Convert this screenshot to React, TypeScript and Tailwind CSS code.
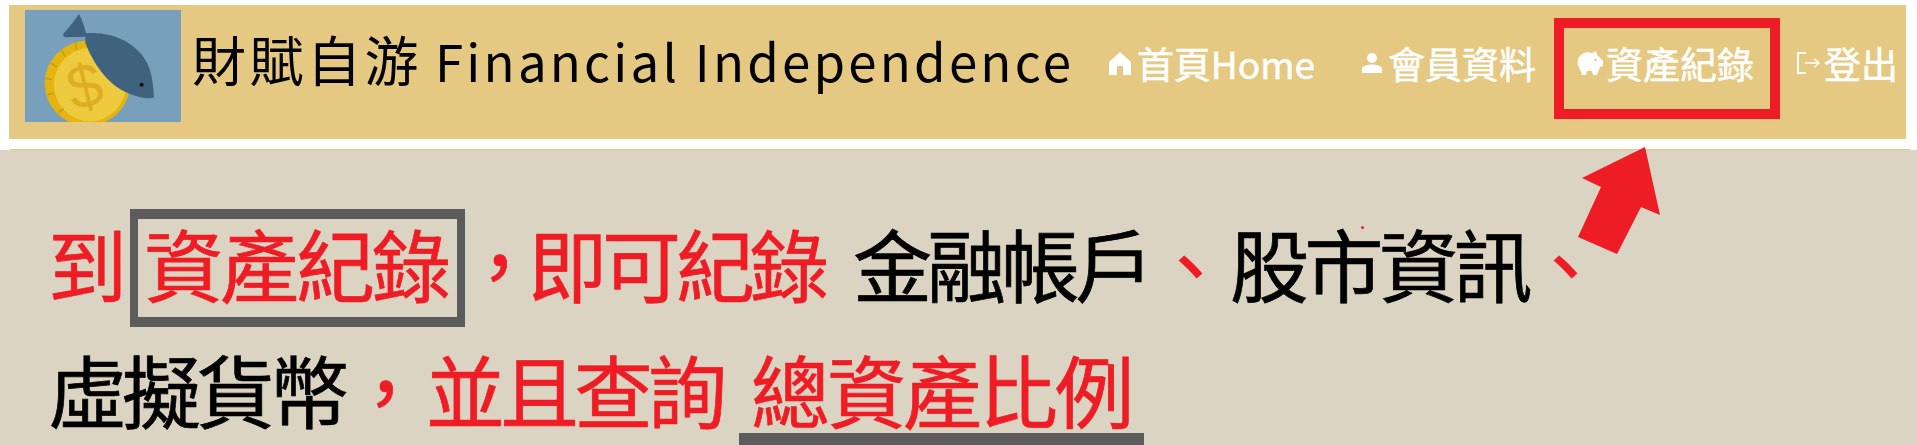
function Logo() {
  return (
    <svg viewBox="45 30 468 336" className="w-[156px] h-[112px] shrink-0 mt-[5px] ml-[16px]">
      <rect x="45" y="30" width="468" height="336" fill="#789FBC" />
      <clipPath id="logo-clip"><rect x="45" y="30" width="468" height="336" /></clipPath>
      <g clipPath="url(#logo-clip)">
        <ellipse cx="232" cy="250" rx="128" ry="128" fill="#E5B50F" />
        <ellipse cx="240" cy="254" rx="108" ry="110" fill="#EECB3E" />
        <g stroke="#B99A1C" strokeWidth="4">
          <path d="M196 128l4 22M155 150l10 20M122 190l18 10M106 236l20 2M112 284l20-4M145 338l16-12" />
        </g>
        <text x="222" y="322" fontSize="185" fontFamily="Liberation Sans" fill="#DDAE22" transform="rotate(-14 222 250)" textAnchor="middle">$</text>
        <path d="M226 100C300 92 380 125 412 190C428 225 430 265 432 292C425 300 380 292 345 275C290 248 250 190 226 128Z" fill="#3F627F" />
        <path d="M207 42C218 60 224 85 232 110L165 112C155 105 160 100 168 92C182 78 195 58 207 42Z" fill="#3F627F" />
        <circle cx="395" cy="254" r="6" fill="#0b0b0b" />
      </g>
    </svg>
  );
}

function HomeIcon() {
  return (
    <svg viewBox="0 0 22 24" className="w-[22px] h-[24px] shrink-0" fill="#fff">
      <path d="M11 1L22 11V24H14V15H8V24H0V11Z" />
    </svg>
  );
}

function PersonIcon() {
  return (
    <svg viewBox="0 0 20 20" className="w-[20px] h-[20px] shrink-0" fill="#fff">
      <circle cx="10" cy="5" r="5" />
      <path d="M0 20V16C0 13 5 11.500 10 11.500S20 13 20 16V20Z" />
    </svg>
  );
}

function PiggyIcon() {
  return (
    <svg viewBox="0 0 26 24" className="w-[26px] h-[24px] shrink-0" fill="#fff">
      <path d="M5 3C8 1 12 1 15 2L19 0C19 2 20 3 21 5C23 6 24 8 24.500 9L26 9V15L23 16L20 24H16L15 20H10L9 24H5C4 20 2 17 1 14C0 10 1 6 5 3Z" />
      <circle cx="18.500" cy="9" r="1.200" fill="#E5C983" />
    </svg>
  );
}

function LogoutIcon() {
  return (
    <svg viewBox="0 0 24 22" className="w-[24px] h-[22px] shrink-0" fill="none" stroke="#fff" strokeWidth="2">
      <path d="M9 1H1V21H9" />
      <path d="M8 11H22M17 6.500L22 11L17 15.500" strokeWidth="1.500" />
    </svg>
  );
}

function Arrow() {
  return (
    <svg className="absolute left-[1570px] top-[140px] w-[100px] h-[120px]" viewBox="1570 140 100 120">
      <polygon points="1645,147 1582,178 1601,187 1578,237 1617,254 1641,207 1660,215" fill="#EE1C25" />
    </svg>
  );
}

export default function App() {
  return (
    <div className="relative flex h-[445px] w-[1917px] flex-col overflow-hidden bg-white pt-[5px] font-['Noto_Sans_CJK_TC','Noto_Sans',sans-serif]">
      <header className="ml-[9px] flex h-[134px] w-[1897px] shrink-0 items-start bg-[#E5C983] whitespace-nowrap">
        <Logo />
        <h1 className="ml-[11px] mt-[19px] text-black leading-[70px]">
          <span className="text-[54px] tracking-[3.500px]">財賦自游</span>
          <span className="ml-[13px] text-[51px] tracking-[3.200px]">Financial Independence</span>
        </h1>
        <nav className="ml-auto mr-[8px] mt-[33px] flex items-center text-[37px] leading-[50px] text-white [-webkit-text-stroke:0.5px_currentColor]">
          <span className="flex items-center gap-[6px]"><HomeIcon />首頁Home</span>
          <span className="ml-[47px] flex items-center gap-[6px]"><PersonIcon />會員資料</span>
          <span className="ml-[41px] flex items-center gap-[3px]"><PiggyIcon />資產紀錄</span>
          <span className="ml-[43px] flex items-center gap-[3px]"><LogoutIcon />登出</span>
        </nav>
      </header>
      <div className="mt-[10px] ml-[10px] h-px w-[1900px] shrink-0 bg-[#E5C983]" />
      <main className="flex-1 bg-[#DCD4C2] pl-[48px] pt-[59px] text-[79px] leading-[80px] tracking-[-5px] text-[#EE1C25] whitespace-nowrap [-webkit-text-stroke:0.7px_currentColor]">
        <div className="flex h-[118px] items-center">
          <span className="pb-[10px]">到</span>
          <span className="ml-[8px] flex h-[118px] items-center border-x-[8px] border-y-[10px] border-[#5C5C5C] pb-[10px] pl-[6px] pr-[9px] tracking-[-3px]">資產紀錄</span>
          <span className="ml-[-5px] pb-[10px]">，</span>
          <span className="ml-[-6px] pb-[10px]">即可紀錄</span>
          <span className="ml-[29px] pb-[10px] text-black">金融帳戶</span>
          <span className="ml-[2px] pb-[10px]">、</span>
          <span className="ml-[5px] pb-[10px] tracking-[-4.500px] text-black">股市資訊</span>
          <span className="ml-[-2px] pb-[10px]">、</span>
        </div>
        <div className="mt-[22px] flex items-start">
          <span className="text-black">虛擬貨幣</span>
          <span className="ml-[2px]">，</span>
          <span className="ml-[6px]">並且查詢</span>
          <span className="ml-[17px] border-b-[20px] border-[#5C5C5C] pb-[4px] pl-[12px] pr-[13px] tracking-[-3px]">總資產比例</span>
        </div>
      </main>
      <div className="absolute left-[1554px] top-[18px] h-[101px] w-[226px] border-[10px] border-[#EE1C25]" />
      <div className="absolute left-[1361px] top-[226px] h-[3px] w-[3px] rounded-full bg-[#EE1C25]" />
      <Arrow />
    </div>
  );
}
